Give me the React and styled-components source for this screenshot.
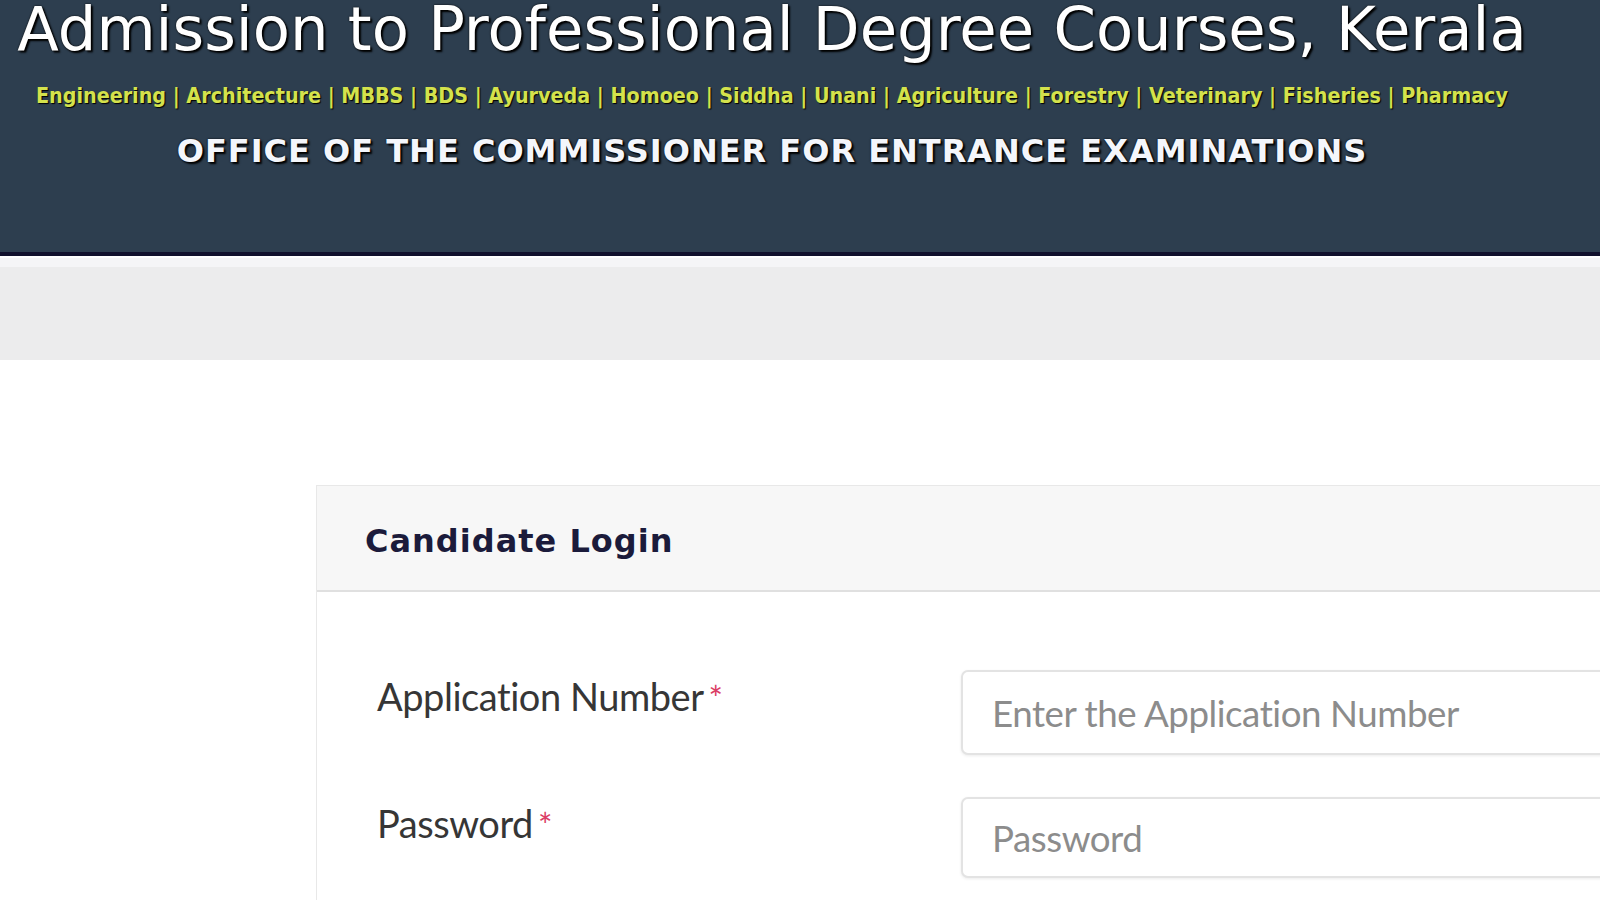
import React from "react";
import styled, { createGlobalStyle } from "styled-components";

const Global = createGlobalStyle`
  html, body { margin: 0; padding: 0; background: #ffffff; overflow: hidden; }
  body { width: 1600px; height: 900px; }
  * { box-sizing: border-box; }
`;

const Header = styled.header`
  background: #2d3e4f;
  height: 256px;
  border-bottom: 4px solid #10102c;
  padding-right: 56px;
  text-align: center;
  color: #ffffff;
  font-family: "DejaVu Sans", Verdana, sans-serif;
`;

const Title = styled.h1`
  margin: 0;
  font-size: 60.8px;
  line-height: 58px;
  font-weight: normal;
  white-space: nowrap;
  text-shadow: 0 0 2px #000000, 2px 2px 2px #000000;
`;

const Courses = styled.div`
  margin-top: 26px;
  font-family: "DejaVu Sans Condensed", "DejaVu Sans", sans-serif;
  font-stretch: condensed;
  font-weight: bold;
  font-size: 21.3px;
  line-height: 24px;
  color: #d4e24c;
  white-space: nowrap;
  text-shadow: 1px 1px 1px #000000;
`;

const Office = styled.div`
  margin-top: 23px;
  font-size: 32px;
  font-weight: bold;
  line-height: 40px;
  letter-spacing: 1px;
  color: #f4f6fb;
  white-space: nowrap;
  text-shadow: 0 0 2px #000000, 2px 2px 2px #000000;
`;

const Band = styled.div`
  margin-top: 2px;
  height: 102px;
  background: linear-gradient(#f5f5f7 0, #f5f5f7 9px, #ececed 9px);
`;

const Card = styled.section`
  margin: 125px 0 0 316px;
  width: 1400px;
  border: 1px solid #e8e8e8;
  border-right: none;
  background: #ffffff;
`;

const CardHeader = styled.div`
  background: #f7f7f7;
  padding: 36px 0 30px 48px;
  border-bottom: 2px solid #e0e0e0;
`;

const CardTitle = styled.h2`
  margin: 0;
  font-family: "DejaVu Sans", Verdana, sans-serif;
  font-weight: bold;
  font-size: 32px;
  line-height: 38px;
  letter-spacing: 1px;
  color: #1b1b3b;
`;

const CardBody = styled.div`
  padding: 78px 0 40px 60px;
  display: flex;
  flex-direction: column;
  gap: 42px;
`;

const Row = styled.div`
  display: grid;
  grid-template-columns: 584px 1fr;
  align-items: start;
`;

const Label = styled.label`
  margin-top: 4px;
  font-family: Lato, "Open Sans", sans-serif;
  font-size: 38px;
  line-height: 44px;
  color: #363636;
  letter-spacing: -0.45px;
`;

const Req = styled.span`
  color: #db3d66;
  font-size: 34px;
  margin-left: 5px;
`;

const Input = styled.input`
  height: ${(p) => p.$h}px;
  width: 800px;
  border: 2px solid #e3e3e3;
  border-radius: 7px;
  box-shadow: 0 1px 3px rgba(0, 0, 0, 0.08);
  padding: 0 0 0 29px;
  font-family: Lato, "Open Sans", sans-serif;
  font-size: 36.7px;
  letter-spacing: -0.45px;
  color: #333;
  outline: none;
  background: #ffffff;
  &::placeholder { color: #8c8c8c; }
`;

const courses = [
  "Engineering", "Architecture", "MBBS", "BDS", "Ayurveda", "Homoeo", "Siddha",
  "Unani", "Agriculture", "Forestry", "Veterinary", "Fisheries", "Pharmacy",
];

export default function App() {
  return (
    <>
      <Global />
      <Header>
        <Title>Admission to Professional Degree Courses, Kerala</Title>
        <Courses>{courses.join(" | ")}</Courses>
        <Office>OFFICE OF THE COMMISSIONER FOR ENTRANCE EXAMINATIONS</Office>
      </Header>
      <Band />
      <Card>
        <CardHeader>
          <CardTitle>Candidate Login</CardTitle>
        </CardHeader>
        <CardBody>
          <Row>
            <Label>
              Application Number<Req>*</Req>
            </Label>
            <Input $h={85} placeholder="Enter the Application Number" />
          </Row>
          <Row>
            <Label>
              Password<Req>*</Req>
            </Label>
            <Input $h={81} type="password" placeholder="Password" />
          </Row>
        </CardBody>
      </Card>
    </>
  );
}
